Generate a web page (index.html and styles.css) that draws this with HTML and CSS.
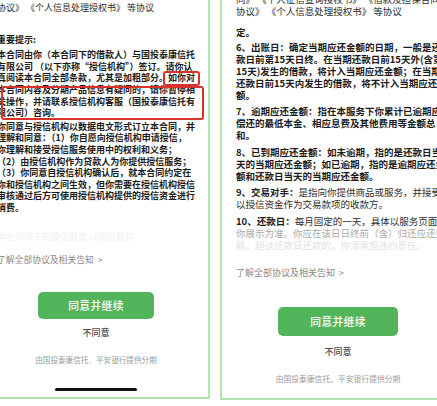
FILE: index.html
```html
<!DOCTYPE html>
<html lang="zh-CN">
<head>
<meta charset="utf-8">
<title>协议确认</title>
<link rel="stylesheet" href="styles.css">
</head>
<body>
<div class="stage">
  <section class="panel left">
    <p class="line plain l-top">协议》 《个人信息处理授权书》 等协议</p>
    <p class="line bold l-head">重要提示:</p>
    <p class="line bold l-p1">本合同由你（本合同下的借款人）与国投泰康信托<br>有限公司 （以下亦称“授信机构”）签订。请你认<br>真阅读本合同全部条款，尤其是加粗部分。如你对<br>本合同内容及分期产品信息有疑问的，请你暂停相<br>关操作，并请联系授信机构客服（国投泰康信托有<br>限公司）咨询。</p>
    <p class="line bold l-p2">你同意与授信机构以数据电文形式订立本合同，并<br>理解和同意：（1）你自愿向授信机构申请授信，<br>你理解和接受授信服务使用中的权利和义务；<br>（2）由授信机构作为贷款人为你提供授信服务；<br>（3）你同意自授信机构确认后，就本合同约定在<br>你和授信机构之间生效，但你需要在授信机构授信<br>审核通过后方可使用授信机构提供的授信资金进行<br>消费。</p>
    <p class="line l-fade">本合同项下的授信额度  以授信机构</p>
    <p class="line more l-more">了解全部协议及相关告知 <span class="chev">&gt;</span></p>
    <div class="btn l-btn">同意并继续</div>
    <p class="refuse l-refuse">不同意</p>
    <p class="foot l-foot">由国投泰康信托、平安银行提供分期</p>
    <div class="homebar"></div>
  </section>
  <section class="panel right">
    <p class="line plain r-cut">同》 《个人征信查询授权书》 《借款及担保合同》</p>
    <p class="line plain">协议》 《个人信息处理授权书》 等协议</p>
    <p class="line bold r-ding">定。</p>
    <p class="line bold r-p6">6、出账日：确定当期应还金额的日期，一般是还<br>款日前第15天日终。在当期还款日前15天外(含第<br>15天)发生的借款，将计入当期应还金额；在当期<br>还款日前15天内发生的借款，将不计入当期应还金<br>额。</p>
    <p class="line bold r-p">7、逾期应还金额：指在本服务下你累计已逾期应当<br>偿还的最低本金、相应息费及其他费用等金额总<br>和。</p>
    <p class="line bold r-p">8、已到期应还金额：如未逾期，指的是还款日当<br>天的当期应还金额；如已逾期，指的是逾期应还金<br>额和还款日当天的当期应还金额。</p>
    <p class="line plain r-p"><b>9、交易对手：</b>是指向你提供商品或服务，并接受<br>以授信资金作为交易款项的收款方。</p>
    <p class="line plain r-p"><b>10、还款日：</b>每月固定的一天，具体以服务页面向<br><span class="fade1">你展示为准。你应在该日日终前（含）归还应还金</span><br><span class="fade2">额，超过还款日还款的，你须承担违约责任。</span></p>
    <p class="line more r-more">了解全部协议及相关告知 <span class="chev">&gt;</span></p>
    <div class="btn r-btn">同意并继续</div>
    <p class="refuse r-refuse">不同意</p>
    <p class="foot r-foot">由国投泰康信托、平安银行提供分期</p>
  </section>
  <div class="mark mark-small"></div>
  <div class="mark mark-big"></div>
</div>
</body>
</html>
```

FILE: styles.css
```css
* {
  box-sizing: border-box;
  margin: 0;
  padding: 0;
}

html,
body {
  width: 437px;
  height: 406px;
  overflow: hidden;
  background: #ffffff;
}

body {
  font-family: "Noto Sans CJK SC", "Noto Sans", sans-serif;
  color: #1b1b1b;
}

.stage {
  position: relative;
  display: flex;
  align-items: flex-start;
  gap: 10px;
  width: 480px;
}

.panel {
  flex: none;
  display: flex;
  flex-direction: column;
  overflow: hidden;
  border-bottom: 2px solid #b3e5ab;
  background: #ffffff;
}

.left {
  margin-left: -16px;
  width: 226px;
  height: 399px;
  padding: 0 13px;
  border-right: 2px solid #b3e5ab;
  font-size: 9px;
  line-height: 11.6px;
}

.right {
  width: 234px;
  height: 400px;
  padding: 0 14px;
  border-left: 2px solid #b3e5ab;
  font-size: 9.5px;
  line-height: 12px;
}

.line {
  white-space: nowrap;
}

.bold {
  font-weight: 700;
  color: #1b1b1b;
}

.plain {
  font-weight: 400;
  color: #2e2e2e;
}

.plain b {
  font-weight: 700;
  color: #1b1b1b;
}

.fade1 {
  color: #a9a9a9;
}

.fade2 {
  color: #e2e2e2;
}

.more {
  color: #8a8a8a;
  font-weight: 400;
}

.chev {
  margin-left: 2px;
}

.btn {
  align-self: center;
  display: flex;
  align-items: center;
  justify-content: center;
  background: #52b55c;
  color: #ffffff;
  border-radius: 5px;
  font-size: 10.8px;
  font-weight: 500;
  letter-spacing: 0.3px;
}

.refuse {
  text-align: center;
  color: #4a4a4a;
  font-size: 9px;
  font-weight: 500;
}

.foot {
  text-align: center;
  color: #9a9a9a;
  font-size: 7.6px;
  white-space: nowrap;
}

/* left panel vertical rhythm */
.l-top { margin-top: 1.7px; }
.l-head { margin-top: 20.9px; }
.l-p1 { margin-top: 3.4px; }
.l-p2 { margin-top: 2.1px; }
.l-fade { margin-top: 17.2px; color: #f1f1f1; }
.l-more { margin-top: 11.7px; font-size: 8.8px; }
.l-btn { margin-top: 25.9px; width: 116px; height: 27.6px; }
.l-refuse { margin-top: 7.9px; line-height: 11.6px; }
.l-foot { margin-top: 15.4px; line-height: 11.6px; }

.homebar {
  align-self: center;
  margin-top: 22.7px;
  width: 82px;
  height: 3px;
  border-radius: 2px;
  background: #111111;
}

/* right panel vertical rhythm */
.r-cut { margin-top: -7px; }
.r-ding { margin-top: 8.7px; }
.r-p6 { margin-top: 3px; }
.r-p { margin-top: 4.5px; }
.r-more { margin-top: 16.3px; font-size: 9px; }
.r-btn { margin-top: 27.7px; width: 120.6px; height: 29.3px; }
.r-refuse { margin-top: 9.7px; line-height: 12px; }
.r-foot { margin-top: 15.3px; font-size: 7.8px; line-height: 12px; }

/* red annotation boxes */
.mark {
  position: absolute;
  border: 2px solid #d8322b;
  border-radius: 3px;
}

.mark-small {
  left: 163px;
  top: 70.5px;
  width: 37px;
  height: 15px;
}

.mark-big {
  left: 0.5px;
  top: 85.5px;
  width: 203px;
  height: 34px;
}
```
